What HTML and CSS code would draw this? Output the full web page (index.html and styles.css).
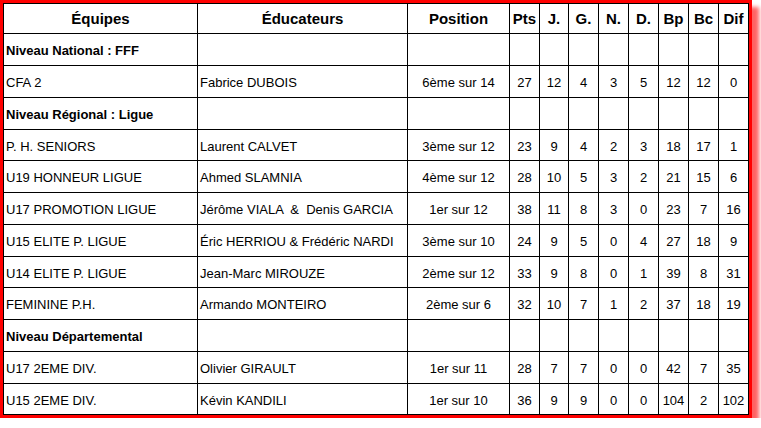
FILE: index.html
```html
<!DOCTYPE html>
<html lang="fr">
<head>
<meta charset="utf-8">
<title>Équipes</title>
<link rel="stylesheet" href="styles.css">
</head>
<body>
<div class="frame">
<table class="standings">
<colgroup>
<col class="c-team"><col class="c-coach"><col class="c-pos">
<col class="c-n"><col class="c-n2"><col class="c-n"><col class="c-n"><col class="c-n"><col class="c-n"><col class="c-n"><col class="c-n">
</colgroup>
<thead>
<tr class="head">
<th>Équipes</th><th>Éducateurs</th><th>Position</th><th>Pts</th><th>J.</th><th>G.</th><th>N.</th><th>D.</th><th>Bp</th><th>Bc</th><th>Dif</th>
</tr>
</thead>
<tbody>
<tr class="group"><td class="name">Niveau National : FFF</td><td></td><td></td><td></td><td></td><td></td><td></td><td></td><td></td><td></td><td></td></tr>
<tr><td class="name">CFA 2</td><td class="name">Fabrice DUBOIS</td><td class="num">6ème sur 14</td><td class="num">27</td><td class="num">12</td><td class="num">4</td><td class="num">3</td><td class="num">5</td><td class="num">12</td><td class="num">12</td><td class="num">0</td></tr>
<tr class="group"><td class="name">Niveau Régional : Ligue</td><td></td><td></td><td></td><td></td><td></td><td></td><td></td><td></td><td></td><td></td></tr>
<tr><td class="name">P. H. SENIORS</td><td class="name">Laurent CALVET</td><td class="num">3ème sur 12</td><td class="num">23</td><td class="num">9</td><td class="num">4</td><td class="num">2</td><td class="num">3</td><td class="num">18</td><td class="num">17</td><td class="num">1</td></tr>
<tr><td class="name">U19 HONNEUR LIGUE</td><td class="name">Ahmed SLAMNIA</td><td class="num">4ème sur 12</td><td class="num">28</td><td class="num">10</td><td class="num">5</td><td class="num">3</td><td class="num">2</td><td class="num">21</td><td class="num">15</td><td class="num">6</td></tr>
<tr><td class="name">U17 PROMOTION LIGUE</td><td class="name">Jérôme VIALA &nbsp;&amp; &nbsp;Denis GARCIA</td><td class="num">1er sur 12</td><td class="num">38</td><td class="num">11</td><td class="num">8</td><td class="num">3</td><td class="num">0</td><td class="num">23</td><td class="num">7</td><td class="num">16</td></tr>
<tr><td class="name">U15 ELITE P. LIGUE</td><td class="name">Éric HERRIOU &amp; Frédéric NARDI</td><td class="num">3ème sur 10</td><td class="num">24</td><td class="num">9</td><td class="num">5</td><td class="num">0</td><td class="num">4</td><td class="num">27</td><td class="num">18</td><td class="num">9</td></tr>
<tr><td class="name">U14 ELITE P. LIGUE</td><td class="name">Jean-Marc MIROUZE</td><td class="num">2ème sur 12</td><td class="num">33</td><td class="num">9</td><td class="num">8</td><td class="num">0</td><td class="num">1</td><td class="num">39</td><td class="num">8</td><td class="num">31</td></tr>
<tr><td class="name">FEMININE P.H.</td><td class="name">Armando MONTEIRO</td><td class="num">2ème sur 6</td><td class="num">32</td><td class="num">10</td><td class="num">7</td><td class="num">1</td><td class="num">2</td><td class="num">37</td><td class="num">18</td><td class="num">19</td></tr>
<tr class="group"><td class="name">Niveau Départemental</td><td></td><td></td><td></td><td></td><td></td><td></td><td></td><td></td><td></td><td></td></tr>
<tr><td class="name">U17 2EME DIV.</td><td class="name">Olivier GIRAULT</td><td class="num">1er sur 11</td><td class="num">28</td><td class="num">7</td><td class="num">7</td><td class="num">0</td><td class="num">0</td><td class="num">42</td><td class="num">7</td><td class="num">35</td></tr>
<tr><td class="name">U15 2EME DIV.</td><td class="name">Kévin KANDILI</td><td class="num">1er sur 10</td><td class="num">36</td><td class="num">9</td><td class="num">9</td><td class="num">0</td><td class="num">0</td><td class="num">104</td><td class="num">2</td><td class="num">102</td></tr>
</tbody>
</table>
</div>
</body>
</html>
```
FILE: styles.css
```css
html, body {
  margin: 0;
  padding: 0;
  background: #ffffff;
}

.frame {
  width: 746px;
  border: 3px solid #ff0000;
  background: #ffffff;
  box-shadow: 7px 7px 4px rgba(255, 60, 60, 0.8);
}

.standings {
  width: 746px;
  border-collapse: collapse;
  table-layout: fixed;
  font-family: "Liberation Sans", Arial, sans-serif;
  font-size: 13px;
  color: #000000;
}

.c-team { width: 194px; }
.c-coach { width: 210px; }
.c-pos { width: 102px; }
.c-n { width: 30px; }
.c-n2 { width: 29px; }

.standings th,
.standings td {
  border: 1px solid #000000;
  padding: 0;
  vertical-align: middle;
  white-space: nowrap;
  overflow: hidden;
}

.standings th {
  font-size: 15px;
  font-weight: bold;
  text-align: center;
  height: 29px;
}

.standings td {
  height: 29px;
  padding-top: 2px;
}

.standings tbody tr:nth-child(4n) td {
  height: 28px;
}

.standings td.name {
  text-align: left;
  padding-left: 2px;
}

.standings td.num {
  text-align: center;
}

.group td.name {
  font-weight: bold;
}
```
